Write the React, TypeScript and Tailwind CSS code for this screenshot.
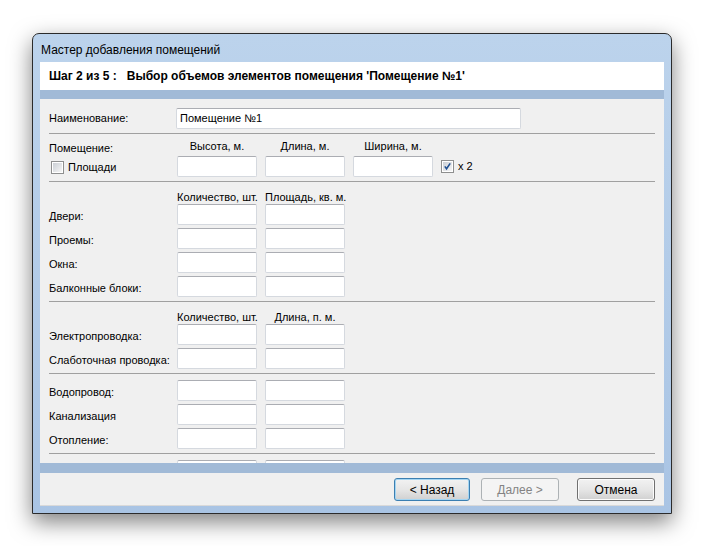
import React from "react";

const font = { fontFamily: '"Liberation Sans", Arial, sans-serif' };

function TextBox({ className = "" }: { className?: string }) {
  return (
    <div
      className={`h-[21px] w-[80px] rounded-[2px] border border-[#d5d9df] border-t-[#abadb3] bg-white ${className}`}
    />
  );
}

function CheckBox({ checked }: { checked?: boolean }) {
  return (
    <div className="flex h-[13px] w-[13px] items-center justify-center border border-[#8e8f8f] bg-white p-[1px]">
      <div className="relative h-full w-full bg-gradient-to-br from-[#cbcfd5] to-[#f6f6f6]">
        {checked && (
          <svg viewBox="0 0 11 11" className="absolute inset-0 h-full w-full">
            <path d="M2.2 5.4 L4.3 8.3 L8.8 1.6" fill="none" stroke="#1f4f91" strokeWidth="1.9" />
          </svg>
        )}
      </div>
    </div>
  );
}

function Separator() {
  return <div className="h-px bg-[#a0a0a0]" />;
}

function FieldRow({ label }: { label: string }) {
  return (
    <div className="flex h-[21px] items-center">
      <div className="w-[128px] pt-[3px]">{label}</div>
      <TextBox />
      <TextBox className="ml-[8px]" />
    </div>
  );
}

function ColumnHeaders({ first, second }: { first: string; second: string }) {
  return (
    <div className="flex h-[13px] items-end leading-[13px]">
      <div className="w-[128px]" />
      <div className="w-[80px] whitespace-nowrap text-center">{first}</div>
      <div className="ml-[8px] w-[80px] whitespace-nowrap text-center">{second}</div>
    </div>
  );
}

function WizardButton({
  label,
  kind,
  className = "",
}: {
  label: string;
  kind: "focus" | "disabled" | "normal";
  className?: string;
}) {
  const styles =
    kind === "disabled"
      ? "border-[#adb2b5] bg-[#f4f4f4] text-[#838383]"
      : kind === "focus"
        ? "border-[#3c7fb1] bg-gradient-to-b from-[#f2f2f2] via-[#e6e6e6] to-[#d0d0d0] text-black shadow-[inset_0_0_0_1px_#a4d5f2]"
        : "border-[#707070] bg-gradient-to-b from-[#f2f2f2] via-[#e6e6e6] to-[#d0d0d0] text-black shadow-[inset_0_0_0_1px_#fcfcfc]";
  return (
    <div
      className={`flex h-[23px] items-center justify-center rounded-[3px] border text-[12px] ${styles} ${className}`}
    >
      {label}
    </div>
  );
}

export default function App() {
  return (
    <div className="h-[546px] w-[704px] overflow-hidden bg-white pl-[32px] pt-[33px]" style={font}>
      <div className="flex h-[481px] w-[640px] flex-col rounded-t-[7px] border border-[#2b2b2b] bg-gradient-to-b from-[#bcd3ec] to-[#a9c4e4] px-[7px] pb-[7px] shadow-[0_8px_22px_rgba(0,0,0,0.5)]">
        {/* title bar */}
        <div className="flex h-[28px] items-center pl-[1px] pt-[4px] text-[12px] text-black">
          Мастер добавления помещений
        </div>

        {/* step header */}
        <div className="flex h-[28px] items-center bg-white pl-[9px] text-[12px] font-bold text-black whitespace-pre">
          {"Шаг 2 из 5 :   Выбор объемов элементов помещения 'Помещение №1'"}
        </div>
        <div className="h-[9px] bg-[#a1bad7]" />

        {/* content */}
        <div className="h-[364px] overflow-hidden bg-[#f0f0f0] px-[9px] pt-[9px] text-[11px] text-black">
          <div className="flex h-[21px] items-center">
            <div className="w-[127px]">Наименование:</div>
            <div className="flex h-[21px] w-[345px] items-center rounded-[2px] border border-[#d5d9df] border-t-[#abadb3] bg-white pl-[3px]">
              Помещение №1
            </div>
          </div>
          <div className="mt-[4px]">
            <Separator />
          </div>

          {/* room dimensions */}
          <div className="flex pt-[6px]">
            <div className="w-[128px]">
              <div className="mt-[2px] leading-[13px]">Помещение:</div>
              <div className="mt-[6px] flex items-center gap-[4px] pl-[2px] leading-[13px]">
                <CheckBox />
                <span>Площади</span>
              </div>
            </div>
            <div>
              <div className="flex h-[13px] leading-[13px]">
                <div className="w-[80px] text-center">Высота, м.</div>
                <div className="ml-[8px] w-[80px] text-center">Длина, м.</div>
                <div className="ml-[8px] w-[80px] text-center">Ширина, м.</div>
              </div>
              <div className="mt-[3px] flex items-center">
                <TextBox />
                <TextBox className="ml-[8px]" />
                <TextBox className="ml-[8px]" />
                <div className="ml-[8px]">
                  <CheckBox checked />
                </div>
                <span className="ml-[4px]">x 2</span>
              </div>
            </div>
          </div>
          <div className="mt-[4px]">
            <Separator />
          </div>

          {/* openings */}
          <div className="pt-[9px]">
            <ColumnHeaders first="Количество, шт." second="Площадь, кв. м." />
            <div className="flex flex-col gap-[3px]">
              <FieldRow label="Двери:" />
              <FieldRow label="Проемы:" />
              <FieldRow label="Окна:" />
              <FieldRow label="Балконные блоки:" />
            </div>
          </div>
          <div className="mt-[4px]">
            <Separator />
          </div>

          {/* wiring */}
          <div className="pt-[9px]">
            <ColumnHeaders first="Количество, шт." second="Длина, п. м." />
            <div className="flex flex-col gap-[3px]">
              <FieldRow label="Электропроводка:" />
              <FieldRow label="Слаботочная проводка:" />
            </div>
          </div>
          <div className="mt-[4px]">
            <Separator />
          </div>

          {/* pipes */}
          <div className="flex flex-col gap-[3px] pt-[6px]">
            <FieldRow label="Водопровод:" />
            <FieldRow label="Канализация" />
            <FieldRow label="Отопление:" />
          </div>
          <div className="mt-[4px]">
            <Separator />
          </div>
          <div className="flex flex-col gap-[3px] pt-[6px]">
            <FieldRow label="" />
          </div>
        </div>

        <div className="h-[10px] bg-[#a1bad7]" />

        {/* buttons */}
        <div className="flex h-[33px] justify-end border-b border-[#d9d9d9] bg-[#f0f0f0] pr-[9px] pt-[5px]">
          <WizardButton label="< Назад" kind="focus" className="w-[76px]" />
          <WizardButton label="Далее >" kind="disabled" className="ml-[11px] w-[78px]" />
          <WizardButton label="Отмена" kind="normal" className="ml-[18px] w-[78px]" />
        </div>
      </div>
    </div>
  );
}
